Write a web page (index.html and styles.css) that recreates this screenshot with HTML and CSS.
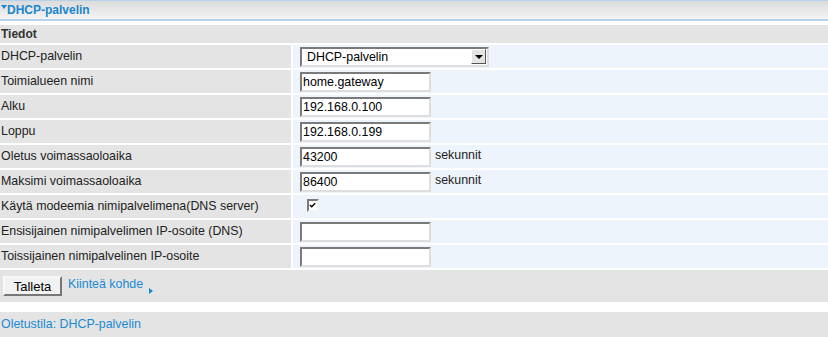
FILE: index.html
```html
<!DOCTYPE html>
<html>
	<head>
		<title>DHCP-palvelin</title>
		<link rel="stylesheet" href="styles.css">
	</head>
	<body>
		<div class='title'>
			<span class='twisty'></span>DHCP-palvelin
		</div>
		<div class='form'>
			<div class='section'>Tiedot</div>

			<div class='label'>DHCP-palvelin</div>
			<div class='value'>
				<span class='select'>
					<span class='select-text'>DHCP-palvelin</span>
					<span class='select-btn'><span class='down'></span></span>
				</span>
			</div>

			<div class='label'>Toimialueen nimi</div>
			<div class='value'><input class='field' type='text' value='home.gateway'></div>

			<div class='label'>Alku</div>
			<div class='value'><input class='field' type='text' value='192.168.0.100'></div>

			<div class='label'>Loppu</div>
			<div class='value'><input class='field' type='text' value='192.168.0.199'></div>

			<div class='label'>Oletus voimassaoloaika</div>
			<div class='value'><input class='field' type='text' value='43200'><span class='unit'>sekunnit</span></div>

			<div class='label'>Maksimi voimassaoloaika</div>
			<div class='value'><input class='field' type='text' value='86400'><span class='unit'>sekunnit</span></div>

			<div class='label'>Käytä modeemia nimipalvelimena(DNS server)</div>
			<div class='value'>
				<span class='check'>
					<svg width='9' height='9' viewBox='0 0 9 9'><path d='M1 4 L3 6 L7 2' fill='none' stroke='#000' stroke-width='1.6'/></svg>
				</span>
			</div>

			<div class='label'>Ensisijainen nimipalvelimen IP-osoite (DNS)</div>
			<div class='value'><input class='field' type='text' value=''></div>

			<div class='label'>Toissijainen nimipalvelinen IP-osoite</div>
			<div class='value'><input class='field' type='text' value=''></div>
		</div>
		<div class='actions'>
			<button class='btn' type='button'>Talleta</button>
			<a class='link' href='#'>Kiinteä kohde</a>
			<span class='arrow'></span>
		</div>
		<div class='status'>Oletustila: DHCP-palvelin</div>
	</body>
</html>
```

FILE: styles.css
```css
body {
	margin: 0;
	font-size: 12.4px;
	font-family: "Liberation Sans", Arial, sans-serif;
	color: #222;
}
.title {
	height: 18px;
	line-height: 18px;
	border-top: 1px solid #b9d2ec;
	border-bottom: 2px solid #b9d2ec;
	background: linear-gradient(#dcdcdc, #f4f4f4);
	color: #1a86cf;
	font-size: 12px;
	font-weight: bold;
	padding-left: 1px;
}
.twisty {
	display: inline-block;
	width: 0;
	height: 0;
	border-left: 3px solid transparent;
	border-right: 3px solid transparent;
	border-top: 4px solid #1a86cf;
	vertical-align: 5px;
}
.form {
	display: grid;
	grid-template-columns: 291px 1fr;
	gap: 2px;
	margin-top: 4px;
}
.section {
	grid-column: 1 / 3;
	height: 18px;
	line-height: 18px;
	background-color: #e4e4e4;
	font-size: 12px;
	font-weight: bold;
	color: #333;
	padding-left: 1px;
}
.label {
	height: 23px;
	line-height: 22px;
	background-color: #e4e4e4;
	padding-left: 1px;
	white-space: nowrap;
}
.value {
	height: 23px;
	background-color: #edf4fc;
	display: flex;
	align-items: center;
	padding-left: 7px;
}
.field {
	box-sizing: border-box;
	width: 131px;
	height: 20px;
	margin: 0;
	padding: 0 0 0 1px;
	border: 2px solid;
	border-color: #7a7a7a #dedede #dedede #7a7a7a;
	background: #fff;
	font-size: 12.4px;
	font-family: "Liberation Sans", Arial, sans-serif;
	color: #000;
}
.unit {
	margin-left: 4px;
	padding-bottom: 3px;
}
.select {
	box-sizing: border-box;
	display: flex;
	align-items: center;
	width: 189px;
	height: 20px;
	border: 2px solid;
	border-color: #7a7a7a #dedede #dedede #7a7a7a;
	background: #fff;
	color: #000;
}
.select-text {
	flex: 1;
	padding-left: 5px;
}
.select-btn {
	box-sizing: border-box;
	width: 15px;
	height: 15px;
	margin-right: 1px;
	border: 1px solid;
	border-color: #fff #555 #555 #fff;
	background: #e4e4e4;
	display: flex;
	align-items: center;
	justify-content: center;
}
.down {
	width: 0;
	height: 0;
	border-left: 4px solid transparent;
	border-right: 4px solid transparent;
	border-top: 4px solid #000;
}
.check {
	box-sizing: border-box;
	display: flex;
	align-items: center;
	justify-content: center;
	width: 12px;
	height: 13px;
	margin-left: 7px;
	margin-bottom: 3px;
	border: 2px solid;
	border-color: #7a7a7a #f4f4f4 #f4f4f4 #7a7a7a;
	background: #fff;
}
.actions {
	display: flex;
	align-items: center;
	height: 32px;
	margin-top: 2px;
	background-color: #e4e4e4;
	padding-left: 3px;
}
.btn {
	box-sizing: border-box;
	width: 59px;
	height: 20px;
	padding: 0;
	border: 2px solid;
	border-color: #f8f8f8 #777 #777 #f8f8f8;
	background: #f2f2f2;
	font-size: 13px;
	font-family: "Liberation Sans", Arial, sans-serif;
	color: #000;
}
.link {
	color: #1a8ad4;
	text-decoration: none;
	margin-left: 6px;
	margin-bottom: 4px;
}
.arrow {
	width: 0;
	height: 0;
	border-top: 3px solid transparent;
	border-bottom: 3px solid transparent;
	border-left: 4px solid #1a86cf;
	margin-left: 6px;
	margin-top: 10px;
}
.status {
	margin-top: 10px;
	height: 25px;
	line-height: 25px;
	background-color: #e4e4e4;
	color: #1a8ad4;
	padding-left: 1px;
}
```
